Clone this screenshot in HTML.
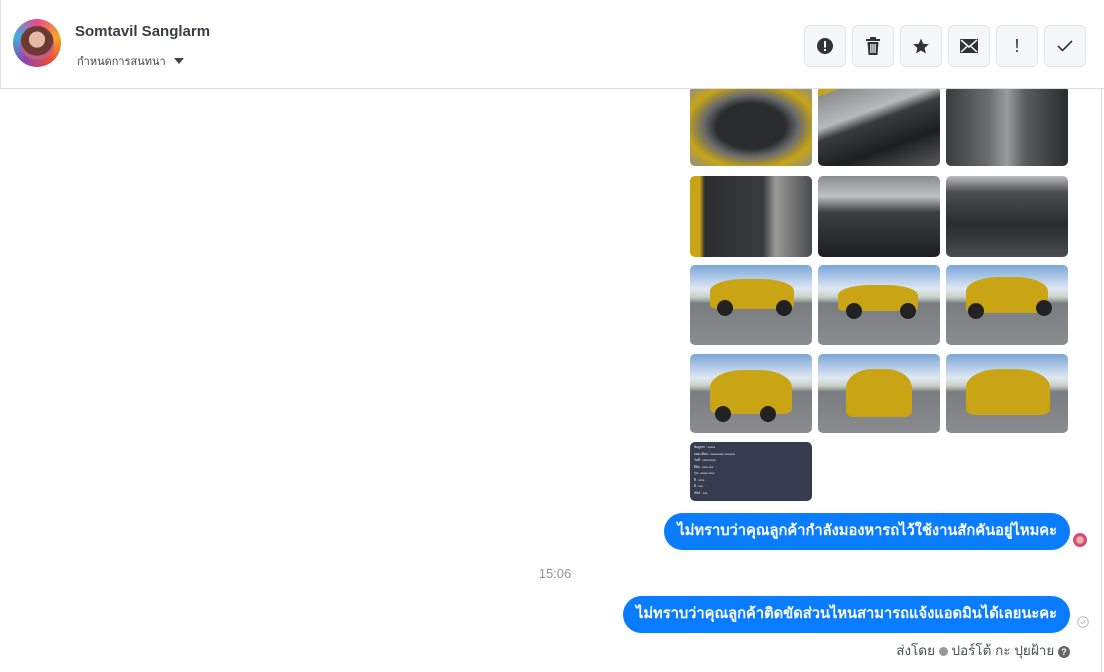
<!DOCTYPE html>
<html><head><meta charset="utf-8"><style>
*{box-sizing:border-box;margin:0;padding:0}
body{width:1104px;height:672px;overflow:hidden;background:#fff;font-family:"Liberation Sans","Noto Sans CJK SC",sans-serif;position:relative}
.hdr{position:absolute;left:0;top:0;width:1104px;height:89px;border-bottom:1px solid #dcdde0;border-left:1px solid #e3e3e3;background:#fff;z-index:2}
.av{position:absolute;left:12px;top:19px;width:48px;height:48px;border-radius:50%;background:conic-gradient(#e84a8a,#f6a623,#e94c3b,#8e44ad,#3ab0e2,#e84a8a);}
.av i{position:absolute;left:7px;top:7px;width:34px;height:34px;border-radius:50%;background:radial-gradient(circle at 50% 40%,#e6b9a6 0 30%,#6b3a32 31% 60%,#c05a8a 61%)}
.name{position:absolute;left:74px;top:23px;font-size:15px;font-weight:bold;color:#3a3d45}
.sub{position:absolute;left:76px;top:52px;font-size:11px;color:#444}
.sub b{display:inline-block;width:0;height:0;border-left:5px solid transparent;border-right:5px solid transparent;border-top:6px solid #444;margin-left:8px;vertical-align:1px}
.btn{position:absolute;top:25px;width:42px;height:42px;border:1px solid #e2e4e8;border-radius:6px;background:#f6f7f9;display:flex;align-items:center;justify-content:center;color:#333}
.img{position:absolute;width:122px;border-radius:5px;overflow:hidden}
.out{background:linear-gradient(#7aa6d8 0,#dfe8f2 30%,#c9d2c8 40%,#7a7d80 48%,#8a8c8f 100%)}
.car{position:absolute;background:#c9a415;border-radius:40% 40% 12% 12%}
.whl{position:absolute;width:16px;height:16px;border-radius:50%;background:#222}
.bub{position:absolute;right:34px;height:37px;border-radius:19px;background:#0a7cff;color:#fff;font-size:14.7px;font-weight:bold;line-height:37px;padding:0 13px;white-space:nowrap}
</style></head><body>
<div class="hdr">
<div class="av"><i></i></div>
<div class="name">Somtavil Sanglarm</div>
<div class="sub">กำหนดการสนทนา<b></b></div>
<div class="btn" style="left:803px"><svg width="18" height="18" viewBox="0 0 18 18"><circle cx="9" cy="9" r="8" fill="#333"/><rect x="8" y="4" width="2" height="6.5" fill="#fff"/><rect x="8" y="12" width="2" height="2" fill="#fff"/></svg></div>
<div class="btn" style="left:851px"><svg width="16" height="18" viewBox="0 0 16 18"><rect x="1" y="2" width="14" height="2" fill="#333"/><rect x="5" y="0" width="6" height="2" fill="#333"/><path d="M2.5 5h11l-1 13h-9z" fill="#333"/><rect x="5.3" y="7" width="1.2" height="9" fill="#fff"/><rect x="7.4" y="7" width="1.2" height="9" fill="#fff"/><rect x="9.5" y="7" width="1.2" height="9" fill="#fff"/></svg></div>
<div class="btn" style="left:899px"><svg width="18" height="18" viewBox="0 0 24 24"><path d="M12 2l3 7 7.5.6-5.7 5 1.8 7.4L12 18l-6.6 4 1.8-7.4-5.7-5L9 9z" fill="#333"/></svg></div>
<div class="btn" style="left:947px"><svg width="18" height="14" viewBox="0 0 18 14"><rect width="18" height="14" fill="#333"/><path d="M1 1l8 7 8-7M1 13l6-5.5M17 13l-6-5.5" stroke="#f6f7f9" stroke-width="1.5" fill="none"/></svg></div>
<div class="btn" style="left:995px;font-size:18px">!</div>
<div class="btn" style="left:1043px"><svg width="16" height="12" viewBox="0 0 16 12"><path d="M1 6l4.5 4.5L15 1" stroke="#333" stroke-width="1.6" fill="none"/></svg></div>
</div>
<div style="position:absolute;right:2px;top:89px;width:1px;height:583px;background:#ddd"></div>

<div class="img" style="left:690px;top:86px;height:80px;background:radial-gradient(ellipse at 50% 50%,#2b2c2e 0 40%,#6a6b6c 55%,#c7a416 75%,#8c8c8c 100%)"></div>
<div class="img" style="left:818px;top:86px;height:80px;background:linear-gradient(160deg,#c8a416 0 8%,#8c8d8f 9%,#b8b9bb 35%,#3a3b3d 45%,#1d1e20 70%,#5a5a5c 100%)"></div>
<div class="img" style="left:946px;top:86px;height:80px;background:linear-gradient(90deg,#3b3c3e,#6c6d6f 35%,#9a9b9d 50%,#5b5c5e 65%,#2a2b2d)"></div>
<div class="img" style="left:690px;top:176px;height:81px;background:linear-gradient(90deg,#c9a416 0 8%,#2c2d2f 12%,#3a3b3d 60%,#9a9a98 70%,#4a4b4d 100%)"></div>
<div class="img" style="left:818px;top:176px;height:81px;background:linear-gradient(#8c8c8c 0,#c0c2c4 25%,#3d3e40 45%,#1e1f21 100%)"></div>
<div class="img" style="left:946px;top:176px;height:81px;background:linear-gradient(#bbbbbb 0,#4d4e50 20%,#2a2b2d 60%,#4b4c4e 100%)"></div>
<div class="img out" style="left:690px;top:265px;height:80px"><div class="car" style="left:20px;top:14px;width:84px;height:30px"></div><div class="whl" style="left:27px;top:35px"></div><div class="whl" style="left:86px;top:35px"></div></div>
<div class="img out" style="left:818px;top:265px;height:80px"><div class="car" style="left:20px;top:20px;width:80px;height:26px"></div><div class="whl" style="left:28px;top:38px"></div><div class="whl" style="left:82px;top:38px"></div></div>
<div class="img out" style="left:946px;top:265px;height:80px"><div class="car" style="left:20px;top:12px;width:82px;height:36px"></div><div class="whl" style="left:22px;top:38px"></div><div class="whl" style="left:90px;top:35px"></div></div>
<div class="img out" style="left:690px;top:354px;height:79px"><div class="car" style="left:20px;top:16px;width:82px;height:44px"></div><div class="whl" style="left:25px;top:52px"></div><div class="whl" style="left:70px;top:52px"></div></div>
<div class="img out" style="left:818px;top:354px;height:79px"><div class="car" style="left:28px;top:15px;width:66px;height:48px"></div></div>
<div class="img out" style="left:946px;top:354px;height:79px"><div class="car" style="left:20px;top:15px;width:84px;height:46px"></div></div>
<div class="img" style="left:690px;top:442px;height:59px;background:#353c4d;color:#fff;font-size:3px;line-height:6.5px;padding:2px 4px">ข้อมูลรถ : xxxxx<br>ลงทะเบียน : xxxxxxxxx xxxxxxx<br>วันที่ : xx/xx/xxxx<br>ยี่ห้อ : xxxx xxx<br>รุ่น : xxxxx xxxx<br>ปี : xxxx<br>สี : xxx<br>เกียร์ : xxx</div>

<div class="bub" style="top:513px">ไม่ทราบว่าคุณลูกค้ากำลังมองหารถไว้ใช้งานสักคันอยู่ไหมคะ</div>
<div style="position:absolute;left:1073px;top:533px;width:14px;height:14px;border-radius:50%;background:radial-gradient(circle,#e8b5a6 0 35%,#d94a7a 40%)"></div>
<div style="position:absolute;left:0;width:1110px;top:566px;text-align:center;font-size:13px;color:#90949c">15:06</div>
<div class="bub" style="top:596px">ไม่ทราบว่าคุณลูกค้าติดขัดส่วนไหนสามารถแจ้งแอดมินได้เลยนะคะ</div>
<svg style="position:absolute;left:1077px;top:616px" width="12" height="12" viewBox="0 0 12 12"><circle cx="6" cy="6" r="5.3" fill="none" stroke="#bbb" stroke-width="1"/><path d="M3.5 6l1.8 1.8L8.5 4.5" stroke="#bbb" fill="none"/></svg>
<div style="position:absolute;right:34px;top:639px;font-size:13.5px;color:#4b4f56;white-space:nowrap">ส่งโดย <span style="display:inline-block;width:9px;height:9px;border-radius:50%;background:#999;vertical-align:-1px"></span> ปอร์โต้ กะ ปุยฝ้าย <span style="display:inline-block;width:12px;height:12px;border-radius:50%;background:#666;color:#fff;font-size:9px;line-height:12px;text-align:center;font-weight:bold;vertical-align:0">?</span></div>
</body></html>
